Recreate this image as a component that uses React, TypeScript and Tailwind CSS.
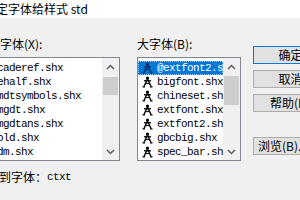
import clsx from "clsx";

const SHX_FONTS = [
  "acaderef.shx",
  "aehalf.shx",
  "amdtsymbols.shx",
  "amgdt.shx",
  "amgdtans.shx",
  "bold.shx",
  "cdm.shx",
];

const BIG_FONTS = [
  "@extfont2.shx",
  "bigfont.shx",
  "chineset.shx",
  "extfont.shx",
  "extfont2.shx",
  "gbcbig.shx",
  "spec_bar.shx",
];

function ShxIcon({ selected }: { selected?: boolean }) {
  return (
    <svg
      width="11"
      height="12"
      viewBox="0 0 11 12"
      className={clsx("shrink-0", selected ? "text-[#0a2a66]" : "text-black")}
      fill="none"
      stroke="currentColor"
    >
      <circle cx="5.5" cy="2" r="1.6" fill="currentColor" stroke="none" />
      <path d="M2 4.8 H9" strokeWidth="1.3" />
      <path d="M5.5 3 L2 10.5 M5.5 3 L9 10.5" strokeWidth="1.4" />
      <path d="M0.5 10.8 H3 M8 10.8 H10.5" strokeWidth="1.2" />
      <path d="M3.5 7.6 H7.5" strokeWidth="1" />
    </svg>
  );
}

function Chevron({ down }: { down?: boolean }) {
  return (
    <svg width="9" height="6" viewBox="0 0 9 6" fill="none">
      <path
        d={down ? "M1 1 L4.5 4.5 L8 1" : "M1 5 L4.5 1.5 L8 5"}
        stroke="#606060"
        strokeWidth="1.5"
      />
    </svg>
  );
}

function FontRow({ name, selected }: { name: string; selected?: boolean }) {
  return (
    <div
      className={clsx(
        "flex h-[14px] items-center pl-[4px] whitespace-nowrap",
        selected && "bg-[#0078d7] text-white outline-1 outline-dotted outline-[#9cc8f0] -outline-offset-1"
      )}
    >
      <ShxIcon selected={selected} />
      <span className="ml-[4px] font-['Liberation_Mono',monospace] text-[11px] leading-[14px] tracking-[-0.6px]">
        {name}
      </span>
    </div>
  );
}

function ListBox({
  items,
  selectedIndex,
  thumbClass,
}: {
  items: string[];
  selectedIndex?: number;
  thumbClass: string;
}) {
  return (
    <div className="mt-[5px] flex h-[104px] border border-[#828790] bg-white">
      <div className="min-w-0 flex-1 overflow-hidden pt-[3px]">
        {items.map((it, i) => (
          <FontRow key={it} name={it} selected={i === selectedIndex} />
        ))}
      </div>
      <div className="flex w-[17px] shrink-0 flex-col bg-[#f0f0f0]">
        <div className="flex h-[17px] items-center justify-center">
          <Chevron />
        </div>
        <div className={clsx("mx-[1px] bg-[#cdcdcd]", thumbClass)} />
        <div className="flex-1" />
        <div className="flex h-[17px] items-center justify-center">
          <Chevron down />
        </div>
      </div>
    </div>
  );
}

function DlgButton({
  children,
  primary,
  className,
}: {
  children: React.ReactNode;
  primary?: boolean;
  className?: string;
}) {
  return (
    <div
      className={clsx(
        "flex h-[18px] w-[75px] items-center justify-center border bg-[#e1e1e1] text-[12px] leading-none text-black",
        primary ? "border-[#0078d7]" : "border-[#adadad]",
        className
      )}
    >
      {children}
    </div>
  );
}

export default function App() {
  return (
    <div className="flex h-[200px] w-[300px] flex-col overflow-hidden bg-[#f0f0f0] font-['Noto_Sans_CJK_SC','Noto_Sans',sans-serif] text-black">
      {/* title bar */}
      <div className="flex h-[18px] shrink-0 items-center bg-white">
        <span className="-ml-[4px] whitespace-nowrap text-[12px] leading-none">定字体给样式 std</span>
      </div>

      <div className="mt-[18px] flex shrink-0">
        {/* SHX fonts */}
        <div className="-ml-[29px] flex w-[149px] shrink-0 flex-col">
          <div className="h-[16px] pl-[29px] text-[12px] leading-[16px] whitespace-nowrap">字体(X):</div>
          <ListBox items={SHX_FONTS} thumbClass="mt-[2px] h-[18px]" />
        </div>

        {/* big fonts */}
        <div className="ml-[17px] flex w-[104px] shrink-0 flex-col">
          <div className="h-[16px] text-[12px] leading-[16px] whitespace-nowrap">大字体(B):</div>
          <ListBox items={BIG_FONTS} selectedIndex={0} thumbClass="mt-[1px] h-[29px]" />
        </div>

        {/* buttons */}
        <div className="ml-[12px] flex shrink-0 flex-col pt-[10px]">
          <DlgButton primary>确定</DlgButton>
          <DlgButton className="mt-[6px]">取消</DlgButton>
          <DlgButton className="mt-[6px]">帮助(H)</DlgButton>
          <DlgButton className="mt-[25px] justify-start pl-[4px]">浏览(B)...</DlgButton>
        </div>
      </div>

      <div className="mt-[8px] flex h-[16px] items-center whitespace-nowrap text-[12px] leading-[16px]">
        <span className="-ml-[1px]">到字体：</span>
        <span className="font-['Liberation_Mono',monospace] text-[11px] tracking-[-0.6px]">ctxt</span>
      </div>
    </div>
  );
}
